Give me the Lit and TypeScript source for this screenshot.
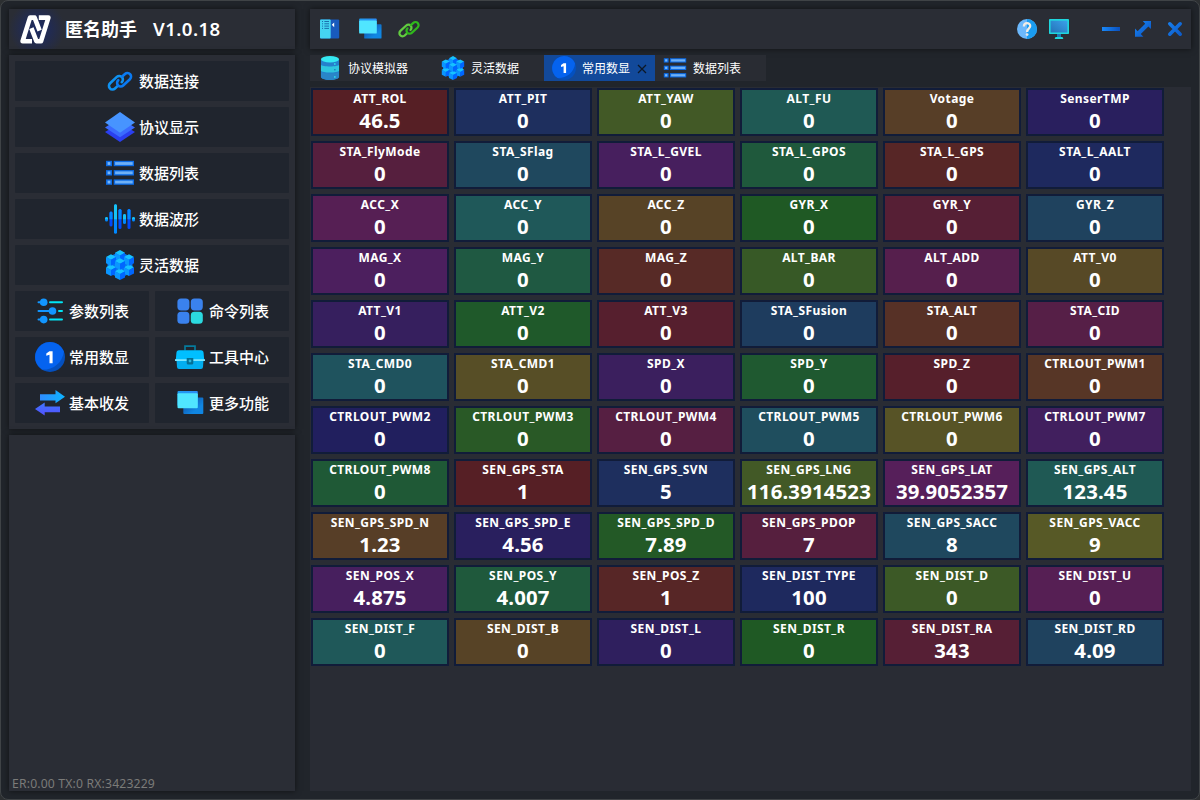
import { LitElement, html, css, svg } from "lit";
import { customElement, property } from "lit/decorators.js";
import { classMap } from "lit/directives/class-map.js";
import { styleMap } from "lit/directives/style-map.js";

type Cell = [name: string, value: string, color: string];

const cells: Cell[] = [
  ["ATT_ROL", "46.5", "#561f25"], ["ATT_PIT", "0", "#1e2f5e"], ["ATT_YAW", "0", "#425926"], ["ALT_FU", "0", "#1f5954"], ["Votage", "0", "#573e27"], ["SenserTMP", "0", "#291f5e"],
  ["STA_FlyMode", "0", "#561f3e"], ["STA_SFlag", "0", "#1f485e"], ["STA_L_GVEL", "0", "#471f5e"], ["STA_L_GPOS", "0", "#1f593c"], ["STA_L_GPS", "0", "#572626"], ["STA_L_AALT", "0", "#1e295e"],
  ["ACC_X", "0", "#561f54"], ["ACC_Y", "0", "#1f5859"], ["ACC_Z", "0", "#574326"], ["GYR_X", "0", "#1f5924"], ["GYR_Y", "0", "#561f35"], ["GYR_Z", "0", "#1f425e"],
  ["MAG_X", "0", "#4c1f5e"], ["MAG_Y", "0", "#1f5942"], ["MAG_Z", "0", "#572a26"], ["ALT_BAR", "0", "#375926"], ["ALT_ADD", "0", "#561f4d"], ["ATT_V0", "0", "#574926"],
  ["ATT_V1", "0", "#361f5e"], ["ATT_V2", "0", "#1f592a"], ["ATT_V3", "0", "#561f2e"], ["STA_SFusion", "0", "#1e3c5e"], ["STA_ALT", "0", "#573126"], ["STA_CID", "0", "#561f47"],
  ["STA_CMD0", "0", "#1f535e"], ["STA_CMD1", "0", "#574e26"], ["SPD_X", "0", "#3b1f5e"], ["SPD_Y", "0", "#1f5930"], ["SPD_Z", "0", "#561f2b"], ["CTRLOUT_PWM1", "0", "#573626"],
  ["CTRLOUT_PWM2", "0", "#211f5e"], ["CTRLOUT_PWM3", "0", "#295926"], ["CTRLOUT_PWM4", "0", "#561f42"], ["CTRLOUT_PWM5", "0", "#1f4e5e"], ["CTRLOUT_PWM6", "0", "#575326"], ["CTRLOUT_PWM7", "0", "#411f5e"],
  ["CTRLOUT_PWM8", "0", "#1f5936"], ["SEN_GPS_STA", "1", "#561f25"], ["SEN_GPS_SVN", "5", "#1e2f5e"], ["SEN_GPS_LNG", "116.3914523", "#425926"], ["SEN_GPS_LAT", "39.9052357", "#561f5a"], ["SEN_GPS_ALT", "123.45", "#1f5954"],
  ["SEN_GPS_SPD_N", "1.23", "#573e27"], ["SEN_GPS_SPD_E", "4.56", "#291f5e"], ["SEN_GPS_SPD_D", "7.89", "#235926"], ["SEN_GPS_PDOP", "7", "#561f3e"], ["SEN_GPS_SACC", "8", "#1f485e"], ["SEN_GPS_VACC", "9", "#575926"],
  ["SEN_POS_X", "4.875", "#471f5e"], ["SEN_POS_Y", "4.007", "#1f593c"], ["SEN_POS_Z", "1", "#572626"], ["SEN_DIST_TYPE", "100", "#1e295e"], ["SEN_DIST_D", "0", "#3c5926"], ["SEN_DIST_U", "0", "#561f54"],
  ["SEN_DIST_F", "0", "#1f5859"], ["SEN_DIST_B", "0", "#574326"], ["SEN_DIST_L", "0", "#2f1f5e"], ["SEN_DIST_R", "0", "#1f5924"], ["SEN_DIST_RA", "343", "#561f35"], ["SEN_DIST_RD", "4.09", "#1f425e"],
];

const chain = (colorA: string, colorB: string) => svg`
  <g fill="none" stroke-width="2.6" stroke-linecap="round" transform="translate(15 15.2) rotate(-43)">
    <path stroke=${colorA} d="M-4.8 1.9H-8.6a3.6 3.6 0 0 1 0 -7.2H0.6a3.6 3.6 0 0 1 0 7.2"/>
    <path stroke=${colorB} d="M4.8 -1.9H8.6a3.6 3.6 0 0 1 0 7.2H-0.6a3.6 3.6 0 0 1 0 -7.2"/>
  </g>`;

const cube = (x: number, y: number) => svg`
  <g transform="translate(${x} ${y})">
    <path fill="#16c2ff" d="M0 0L5 -2.7L10 0L5 2.7Z"/>
    <path fill="#0a96ff" d="M0 0L5 2.7V8.8L0 6.3Z"/>
    <path fill="#0066ff" d="M10 0L5 2.7V8.8L10 6.3Z"/>
  </g>`;

const icons: Record<string, unknown> = {
  chain: chain("#0f92f2", "#0a7af2"),
  chainGreen: chain("#62cc40", "#2fb81c"),
  layers: svg`
    <path fill="#2a3ff0" d="M0 20L15 11L30 20L15 30Z"/>
    <path fill="#3a6bff" d="M0 15.5L15 6L30 15.5L15 25.3Z"/>
    <path fill="#4794ff" d="M15 0L30 10.5L15 20.8L0 10.5Z"/>`,
  list: [2.8, 12.1, 21.4].map(y => svg`
    <rect x="1" y=${y} width="6" height="5.4" fill="#0b6be6"/>
    <rect x="2.6" y=${y + 1.3} width="2.8" height="2.8" fill="#7ab6f5"/>
    <rect x="8.7" y=${y} width="20.3" height="5.4" fill="#0b6be6"/>
    <rect x="10.1" y=${y + 1.3} width="17.6" height="2.8" fill="#6fb0f5"/>`),
  wave: [[1.5, 13, 17.5, 0], [6, 7.6, 22.5, 1], [10.5, 0.2, 29.8, 0], [15, 5, 25, 1], [19.5, 10, 20, 0], [24, 5, 25, 1], [28.5, 13, 17.5, 0]].map(([x, a, b, dark]) => svg`
    <rect x=${x - 1.5} y=${a} width="3" height=${b - a} rx="1.5" fill=${dark ? "#0049fb" : "#0088ff"}/>
    <path fill=${dark ? "#0088ff" : "#17c3f5"} d="M${x - 1.5} 15.2V${a + 1.5}a1.5 1.5 0 0 1 3 0V15.2Z"/>`),
  cubes: svg`
    <path fill="#0878f0" d="M15 1.5L27.5 7.5V22L15 28.5L2.5 22V7.5Z"/>
    ${cube(1, 17.2)}${cube(19, 17.2)}${cube(10, 21.2)}${cube(10, 2.7)}${cube(1, 7)}${cube(19, 7)}${cube(10, 11)}`,
  sliders: svg`
    <g stroke-width="2" stroke-linecap="round">
      <path stroke="#1296ff" d="M3.5 6.3H8M3.5 15H17M3.5 23.6H8"/>
      <path stroke="#00e5f5" d="M15 6.3H27M24 15H27M15 23.6H27"/>
    </g>
    <g fill="#1296ff"><circle cx="8.7" cy="6.3" r="3.8"/><circle cx="17.5" cy="15" r="3.8"/><circle cx="8.7" cy="23.6" r="3.8"/></g>`,
  tiles: svg`
    <g fill="#3a82ee"><rect x="2.4" y="2.4" width="12" height="12" rx="3.6"/><rect x="15.8" y="2.4" width="12" height="12" rx="3.6"/><rect x="2.4" y="15.8" width="12" height="12" rx="3.6"/></g>
    <rect x="15.8" y="15.8" width="12" height="12" rx="3.6" fill="#2bdae0"/>`,
  one: svg`
    <circle cx="15" cy="15" r="15" fill="#0450bf"/>
    <path fill="#0563ef" d="M15 0A15 15 0 0 0 7 27.6C18 28 27.5 21 28.9 9.4A15 15 0 0 0 15 0Z"/>
    <path fill="#fff" d="M14.4 9.2H17.6V21.2H14.5V12.7L11.3 13.8V11.4Z"/>`,
  toolbox: svg`
    <path fill="none" stroke="#057a9c" stroke-width="1.7" d="M10 8.5V4.2H20V8.5"/>
    <path fill="#00bfff" d="M4 8.2H26Q28.4 8.2 28.6 11L29.2 18H0.8L1.4 11Q1.6 8.2 4 8.2Z"/>
    <path fill="#02aef0" d="M1.5 18H28.5L28 25Q27.9 27 26 27H4Q2.1 27 2 25Z"/>
    <path fill="#7ae6ff" d="M0 17.2H30V19H0Z"/>
    <path fill="#046f94" d="M11.7 16H18.3V21Q18.3 22.6 16.8 22.6H13.2Q11.7 22.6 11.7 21Z"/>
    <circle cx="15" cy="19" r="1.4" fill="#2cb8dc"/>`,
  swap: svg`
    <defs>
      <linearGradient id="swapA" x1="0" y1="0" x2="1" y2="0"><stop offset="0" stop-color="#2f8cff"/><stop offset="1" stop-color="#0cb4ff"/></linearGradient>
      <linearGradient id="swapB" x1="0" y1="0" x2="0" y2="1"><stop offset="0" stop-color="#3f78ff"/><stop offset="1" stop-color="#5350ff"/></linearGradient>
    </defs>
    <path fill="url(#swapA)" d="M5 6.2H20.5V2L30 8.8L20.5 15.3V12.4H5Z"/>
    <path fill="url(#swapB)" d="M25 18.4H9.7V14.4L0 21L9.7 27.6V24.2H25Z"/>`,
  windows: svg`
    <defs>
      <linearGradient id="winA" x1="0" y1="0" x2="1" y2="1"><stop offset="0.3" stop-color="#1060b8"/><stop offset="0.7" stop-color="#1086e2"/></linearGradient>
      <linearGradient id="winB" x1="0" y1="0" x2="1" y2="0"><stop offset="0" stop-color="#1e9bf0"/><stop offset="1" stop-color="#2c8cf5"/></linearGradient>
    </defs>
    <rect x="8.3" y="9.5" width="20" height="16.5" rx="1" fill="url(#winA)"/>
    <rect x="2.5" y="3" width="20.3" height="15" rx="1" fill="url(#winB)"/>
    <rect x="2.5" y="5.3" width="20.3" height="15" rx="1" fill="#50e6ff"/>`,
  server: svg`
    <rect x="0" y="0.5" width="19.2" height="19" rx="1" fill="#185abd"/>
    <rect x="0" y="0.5" width="10.7" height="19" rx="1" fill="#45d4f2"/>
    <path stroke="#1a6fae" stroke-width="1" d="M2 2.5H3M4.4 2.5H9M2 4.8H3M4.4 4.8H9M2 7.1H3M4.4 7.1H9M2 9.4H3M4.4 9.4H9"/>
    <path fill="#fff" d="M14.2 3.5V8.2L11.8 5.8Z"/>`,
  database: svg`
    <path fill="#2580cc" d="M3.7 4V26C3.7 28 8 30 15 30S26.3 28 26.3 26V4Z"/>
    <path fill="#2fc6de" d="M3.7 11C5 13.8 25 13.8 26.3 11V18.5C25 21.4 5 21.4 3.7 18.5Z"/>
    <path fill="#2a86c8" d="M3.7 19.8C5 22.6 25 22.6 26.3 19.8V26C26.3 28 22 30 15 30S3.7 28 3.7 26Z"/>
    <ellipse cx="15" cy="4" rx="11.3" ry="4" fill="#35e8f2"/>
    <rect x="20" y="9.2" width="2" height="1.6" fill="#30f0f0"/><rect x="20" y="16.4" width="2" height="1.6" fill="#1a7fc0"/><rect x="20" y="25.4" width="2" height="1.6" fill="#30f0f0"/>`,
  help: svg`
    <circle cx="10" cy="10" r="10" fill="#6cb8fc"/>
    <path fill="#1a9cf0" d="M10 0A10 10 0 0 1 10 20Z"/>
    <path fill="none" stroke="#f0ece6" stroke-width="2.3" d="M6.9 7.4C6.9 3 13.2 3.1 13.2 7C13.2 9.3 10.1 9.7 10.1 13"/>
    <circle cx="10.1" cy="15.6" r="1.4" fill="#e4e4e4"/>`,
  monitor: svg`
    <defs><linearGradient id="mon" x1="0" y1="1" x2="1" y2="0"><stop offset="0" stop-color="#2474b8"/><stop offset="1" stop-color="#3aa0ea"/></linearGradient></defs>
    <rect x="0" y="0" width="20" height="15" rx="0.8" fill="#1fd6dd"/>
    <rect x="1.6" y="1.7" width="16.8" height="11.8" fill="url(#mon)"/>
    <rect x="8" y="15" width="4" height="3.4" fill="#1f78b8"/>
    <path fill="#20d8de" d="M6.5 18H13.5L14.4 20H5.6Z"/>`,
  minimize: svg`
    <defs><linearGradient id="mi" x1="0" y1="0" x2="1" y2="0"><stop offset="0" stop-color="#1988f8"/><stop offset="1" stop-color="#0a50bd"/></linearGradient></defs>
    <rect x="1" y="8" width="18" height="4" fill="url(#mi)"/>`,
  maximize: svg`
    <defs><linearGradient id="ma" x1="0" y1="0" x2="1" y2="1"><stop offset="0" stop-color="#1988f8"/><stop offset="1" stop-color="#0a50bd"/></linearGradient></defs>
    <path fill="url(#ma)" d="M9.8 2H18V10L15.4 7.5L7.8 15L10.4 17.8H2V9.6L4.6 12.2L12.2 4.7Z"/>`,
  close: svg`
    <defs><linearGradient id="cl" x1="0" y1="0" x2="20" y2="20" gradientUnits="userSpaceOnUse"><stop offset="0" stop-color="#1988f8"/><stop offset="1" stop-color="#0a50bd"/></linearGradient></defs>
    <path fill="none" stroke="url(#cl)" stroke-width="3.6" stroke-linecap="round" d="M4.8 4.8L15.2 15.2M15.2 4.8L4.8 15.2"/>`,
  tabClose: svg`<path fill="none" stroke="#0c1828" stroke-width="1.3" d="M1 1L9 9M9 1L1 9"/>`,
  logo: svg`
    <g fill="none" stroke="#fff" stroke-width="4.6" stroke-linejoin="round">
      <path d="M12 26.2H2.6L10 2.6H14.6L19.6 15.6"/>
      <path d="M18.8 2.6H28.4L21 26.2H16.4L11.4 13.2"/>
    </g>`,
};

@customElement("app-icon")
class AppIcon extends LitElement {
  @property() name = "";
  @property() box = "0 0 30 30";

  static styles = css`
    :host { display: block; flex: none; }
    svg { display: block; width: 100%; height: 100%; }
  `;

  render() {
    return html`<svg viewBox=${this.box}>${icons[this.name]}</svg>`;
  }
}

@customElement("app-root")
class AppRoot extends LitElement {
  static styles = css`
    :host {
      display: block;
      width: 1200px;
      height: 800px;
      overflow: hidden;
      background: #2c2f31;
      color: #fff;
      font-family: "Noto Sans", "Noto Sans CJK SC", sans-serif;
    }
    .window {
      box-sizing: border-box;
      height: 800px;
      display: grid;
      grid-template-columns: 286px 881px;
      column-gap: 15px;
      padding: 8px;
      border: 1px solid #404447;
      border-radius: 8px;
      background: #21252b;
    }
    .side, .main { display: flex; flex-direction: column; gap: 6px; min-height: 0; }
    .panel { background: #2a2d35; box-shadow: 0 0 6px rgba(0, 0, 0, 0.55); }
    .brand { height: 40px; display: flex; align-items: center; }
    .brand-mark { width: 56px; height: 40px; display: flex; align-items: center; padding-left: 11px; box-sizing: border-box;
      background: radial-gradient(circle at 28px 20px, #1d2b62 0, #222b50 14px, rgba(42, 45, 53, 0) 28px); }
    .brand-mark app-icon { width: 31px; height: 29px; }
    .brand-name { font: 700 18px/38px "Noto Sans CJK SC", sans-serif; padding-bottom: 2px; }
    .brand-version { margin-left: 16px; font-size: 18.6px; line-height: 40px; font-weight: 650; letter-spacing: 0.45px; }
    .nav { display: grid; grid-template-columns: 1fr 1fr; gap: 6px; padding: 6px; }
    .nav-item { height: 40px; display: flex; align-items: center; justify-content: center; gap: 4px; background: #20252e; border-radius: 1px;
      font: 500 15px/40px "Noto Sans CJK SC", sans-serif; }
    .nav-item.wide { grid-column: span 2; }
    .nav-item app-icon { width: 30px; height: 30px; }
    .log { flex: 1; display: flex; align-items: flex-end; }
    .status { padding: 0 0 0 3px; font-size: 12.2px; line-height: 15px; letter-spacing: 0.17px; color: #7b7b79; }
    .toolbar { height: 40px; display: flex; align-items: center; justify-content: space-between; padding: 0 6px 0 10px; box-sizing: border-box; }
    .tools { display: flex; align-items: center; }
    .tool { width: 20px; height: 20px; }
    .tool.panes { width: 26px; height: 26px; margin-left: 17px; }
    .tool.link { width: 26px; height: 26px; margin-left: 13px; }
    .tool.monitor { margin-left: 12px; }
    .tool.minimize { margin-left: 32px; }
    .tool.maximize, .tool.close { margin-left: 12px; }
    .tabs { display: flex; height: 26px; }
    .tab { display: flex; align-items: center; padding: 0 8px; background: #292c33; font: 400 12px/26px "Noto Sans CJK SC", sans-serif; }
    .tab.active { background: #12499a; }
    .tab app-icon { width: 24px; height: 24px; margin-right: 6px; }
    .tab .tab-x { width: 10px; height: 10px; margin: 2px 0 0 7px; }
    .tab .no-x { width: 17px; }
    .board { flex: 1; background: #292c34; display: grid; grid-template-columns: repeat(6, 138px); grid-auto-rows: 48px; gap: 5px; padding: 1px; align-content: start; }
    .cell { box-sizing: border-box; border: 2px solid #111c39; text-align: center; font-weight: 700; white-space: nowrap; }
    .cell-name { font-size: 12px; line-height: 16px; padding-top: 1px; letter-spacing: 0.42px; }
    .cell-value { font-size: 20.4px; line-height: 26px; letter-spacing: 0.14px; }
  `;

  private wide = [["chain", "数据连接"], ["layers", "协议显示"], ["list", "数据列表"], ["wave", "数据波形"], ["cubes", "灵活数据"]];
  private half = [["sliders", "参数列表"], ["tiles", "命令列表"], ["one", "常用数显"], ["toolbox", "工具中心"], ["swap", "基本收发"], ["windows", "更多功能"]];
  private tabs = [["database", "协议模拟器"], ["cubes", "灵活数据"], ["one", "常用数显"], ["list", "数据列表"]];
  private activeTab = 2;

  private navItem(icon: string, label: string, wide: boolean) {
    return html`<div class=${classMap({ "nav-item": true, wide })}><app-icon name=${icon}></app-icon><span>${label}</span></div>`;
  }

  render() {
    return html`
      <div class="window">
        <div class="side">
          <div class="panel brand">
            <div class="brand-mark"><app-icon name="logo" box="0 0 31 29"></app-icon></div>
            <span class="brand-name">匿名助手</span><span class="brand-version">V1.0.18</span>
          </div>
          <div class="panel nav">
            ${this.wide.map(([i, l]) => this.navItem(i, l, true))}
            ${this.half.map(([i, l]) => this.navItem(i, l, false))}
          </div>
          <div class="panel log"><div class="status">ER:0.00 TX:0 RX:3423229</div></div>
        </div>
        <div class="main">
          <div class="panel toolbar">
            <div class="tools">
              <app-icon class="tool" name="server" box="0 0 20 20"></app-icon>
              <app-icon class="tool panes" name="windows"></app-icon>
              <app-icon class="tool link" name="chainGreen"></app-icon>
            </div>
            <div class="tools">
              <app-icon class="tool" name="help" box="0 0 20 20"></app-icon>
              <app-icon class="tool monitor" name="monitor" box="0 0 20 20"></app-icon>
              <app-icon class="tool minimize" name="minimize" box="0 0 20 20"></app-icon>
              <app-icon class="tool maximize" name="maximize" box="0 0 20 20"></app-icon>
              <app-icon class="tool close" name="close" box="0 0 20 20"></app-icon>
            </div>
          </div>
          <div class="tabs">
            ${this.tabs.map(([icon, label], i) => html`
              <div class=${classMap({ tab: true, active: i === this.activeTab })}>
                <app-icon name=${icon}></app-icon><span>${label}</span>
                ${i === this.activeTab
                  ? html`<app-icon class="tab-x" name="tabClose" box="0 0 10 10"></app-icon>`
                  : html`<span class="no-x"></span>`}
              </div>`)}
          </div>
          <div class="board">
            ${cells.map(([name, value, color]) => html`
              <div class="cell" style=${styleMap({ backgroundColor: color })}>
                <div class="cell-name">${name}</div>
                <div class="cell-value">${value}</div>
              </div>`)}
          </div>
        </div>
      </div>`;
  }
}
